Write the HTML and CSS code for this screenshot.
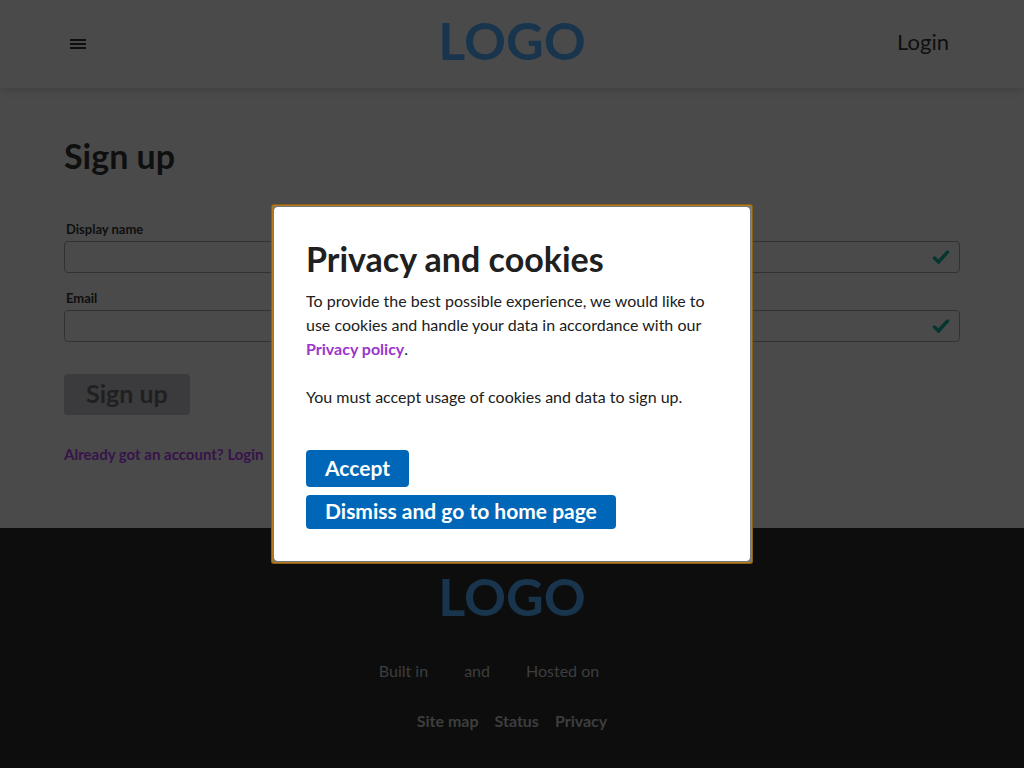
FILE: index.html
```html
<!DOCTYPE html>
<html lang="en">
<head>
<meta charset="utf-8">
<title>Sign up</title>
<link rel="stylesheet" href="styles.css">
</head>
<body>
<div class="page">
  <header class="header">
    <button class="menu-button" type="button" aria-label="Menu">
      <svg width="16" height="10" viewBox="0 0 16 10" fill="currentColor" aria-hidden="true"><path d="M0 0h16v2H0zM0 4h16v2H0zM0 8h16v2H0z"/></svg>
    </button>
    <a class="logo" href="#">LOGO</a>
    <a class="login" href="#">Login</a>
  </header>
  <main class="main">
    <h1 class="title">Sign up</h1>
    <form class="form">
      <div class="field">
        <label class="label" for="name">Display name</label>
        <div class="control">
          <input class="input" id="name" type="text">
          <svg class="check" width="18" height="14" viewBox="0 0 18 14" aria-hidden="true"><path d="M2.500 8l4 4L15.500 2" fill="none" stroke="currentColor" stroke-width="3.400" stroke-linecap="round"/></svg>
        </div>
      </div>
      <div class="field">
        <label class="label" for="email">Email</label>
        <div class="control">
          <input class="input" id="email" type="email">
          <svg class="check" width="18" height="14" viewBox="0 0 18 14" aria-hidden="true"><path d="M2.500 8l4 4L15.500 2" fill="none" stroke="currentColor" stroke-width="3.400" stroke-linecap="round"/></svg>
        </div>
      </div>
      <button class="submit" type="submit" disabled>Sign up</button>
    </form>
    <a class="account-link" href="#">Already got an account? Login</a>
  </main>
  <footer class="footer">
    <a class="logo" href="#">LOGO</a>
    <p class="credits"><span>Built in</span><span>and</span><span>Hosted on</span></p>
    <nav class="links">
      <a href="#">Site map</a>
      <a href="#">Status</a>
      <a href="#">Privacy</a>
    </nav>
  </footer>
</div>
<div class="overlay">
  <div class="dialog-frame">
    <section class="dialog" role="dialog" aria-modal="true" aria-labelledby="dialog-title">
      <h2 class="title" id="dialog-title">Privacy and cookies</h2>
      <p class="text">To provide the best possible experience, we would like to use cookies and handle your data in accordance with our <a class="policy" href="#">Privacy policy</a>.</p>
      <p class="text">You must accept usage of cookies and data to sign up.</p>
      <div class="actions">
        <button class="action accept" type="button">Accept</button>
        <a class="action" href="#">Dismiss and go to home page</a>
      </div>
    </section>
  </div>
</div>
</body>
</html>
```
FILE: styles.css
```css
* { box-sizing: border-box; }
body {
  margin: 0;
  background: #4a4a4a;
  color: #0f0f0f;
  font: 16px/24px Lato, "Open Sans", sans-serif;
}
a { color: inherit; text-decoration: none; }
h1, h2, p { margin: 0; }
button { border: 0; font-family: inherit; }

.page {
  display: flex;
  flex-direction: column;
  min-height: 100vh;
}
.header {
  display: grid;
  grid-template-columns: 1fr auto 1fr;
  align-items: center;
  height: 88px;
  padding: 0 64px;
  box-shadow: 0 2px 6px #404040;
}
.menu-button {
  display: flex;
  justify-self: start;
  padding: 6px;
  background: none;
  color: #0f0f0f;
}
.logo {
  padding-bottom: 8px;
  color: #19354d;
  font-size: 52px;
  font-weight: 700;
  line-height: 56px;
}
.login {
  justify-self: end;
  margin-right: 11px;
  padding-bottom: 4px;
  font-size: 22px;
}

.main {
  flex: 1 0 auto;
  padding: 46px 64px 62px;
}
.title {
  font-size: 34px;
  font-weight: 700;
  line-height: 44px;
}
.form {
  display: flex;
  flex-direction: column;
  gap: 16px;
  margin-top: 42px;
}
.field {
  display: flex;
  flex-direction: column;
}
.label {
  padding: 1px 2px 3px;
  font-size: 13px;
  font-weight: 700;
  line-height: 17px;
}
.control { position: relative; }
.input {
  display: block;
  width: 100%;
  height: 32px;
  padding: 0 36px 0 8px;
  border: 1px solid #323232;
  border-radius: 4px;
  background: transparent;
  color: inherit;
  font: inherit;
}
.check {
  position: absolute;
  top: 9px;
  right: 10px;
  color: #04362f;
}
.submit {
  align-self: flex-start;
  margin-top: 16px;
  padding: 0 22px 2px;
  border-radius: 4px;
  background: #3b3b3d;
  color: #202020;
  font-size: 25px;
  font-weight: 700;
  line-height: 39px;
}
.account-link {
  display: block;
  margin-top: 27px;
  color: #37134a;
  font-size: 15px;
  font-weight: 700;
}

.footer {
  display: flex;
  flex-direction: column;
  align-items: center;
  padding: 40px 64px 35px;
  background: #0d0d0d;
  color: #3e3e3e;
}
.credits {
  display: flex;
  gap: 36px;
  margin: 27px 46px 26px 0;
}
.links {
  display: flex;
  gap: 16px;
  font-weight: 700;
}

.overlay {
  position: fixed;
  inset: 0;
  display: flex;
  align-items: center;
  justify-content: center;
}
.dialog-frame {
  width: 100%;
  max-width: 478px;
  padding: 1px;
  border-radius: 1px;
  background: #777;
  box-shadow: 0 0 0 1px #b57d1c, 0 0 0 2px #8a6019;
}
.dialog {
  padding: 30px 32px 32px;
  border-radius: 4px;
  background: #fff;
  color: #202020;
}
.text { margin-bottom: 24px; }
.dialog .title { margin-bottom: 8px; }
.policy {
  color: #9b35cc;
  font-weight: 700;
}
.actions {
  display: flex;
  flex-direction: column;
  align-items: flex-start;
  gap: 8px;
  margin-top: 41px;
}
.action {
  padding: 0 19px 2px;
  border-radius: 4px;
  background: #0067b8;
  color: #fff;
  font-size: 21px;
  font-weight: 700;
  line-height: 32px;
}
.accept { line-height: 35px; }
```
